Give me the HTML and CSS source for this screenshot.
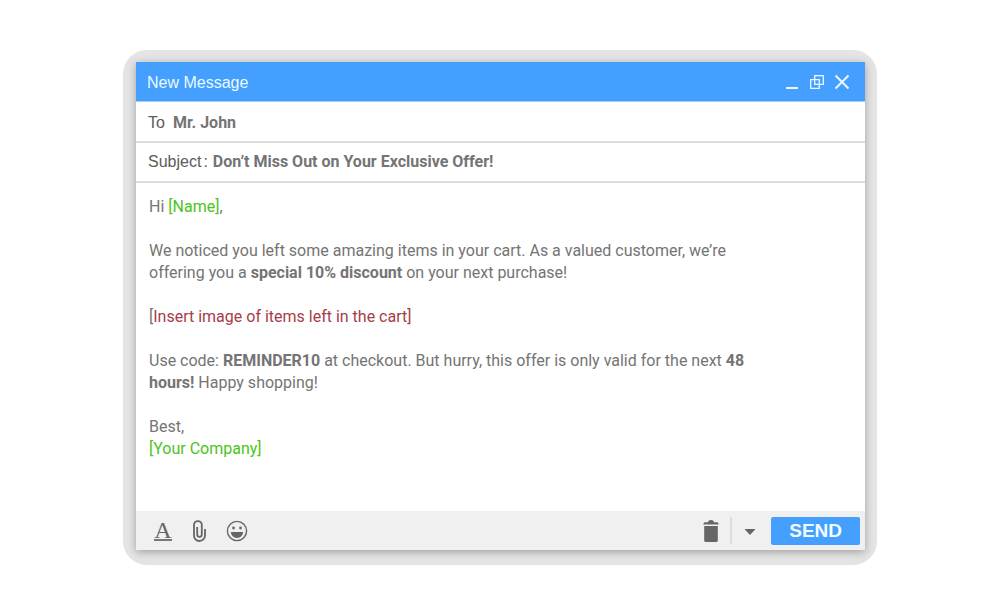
FILE: index.html
```
<!DOCTYPE html>
<html lang="en">
<head>
<meta charset="utf-8">
<meta name="viewport" content="width=device-width, initial-scale=1">
<title>New Message</title>
<link rel="stylesheet" href="styles.css">
</head>
<body>
<main class="frame">
  <form class="composer">
    <header class="titlebar">
      <h1 class="title">New Message</h1>
      <div class="window-controls">
        <button class="icon-button" type="button" aria-label="Minimize">
          <svg width="16" height="16" viewBox="0 0 16 16"><path d="M2 14h12" fill="none" stroke="currentColor" stroke-width="2"/></svg>
        </button>
        <button class="icon-button" type="button" aria-label="Restore">
          <svg width="16" height="16" viewBox="0 0 16 16"><g fill="none" stroke="currentColor" stroke-width="1.3"><path d="M5.700 1.700h8.600v8.600H5.700z"/><path d="M1.700 5.700h8.600v8.600H1.700z"/></g></svg>
        </button>
        <button class="icon-button" type="button" aria-label="Close">
          <svg width="16" height="16" viewBox="0 0 16 16"><path d="M1.500 1.500l13 13M14.500 1.500l-13 13" fill="none" stroke="currentColor" stroke-width="2"/></svg>
        </button>
      </div>
    </header>
    <div class="field field-to">
      <label class="field-label" for="to">To</label>
      <input class="field-input" id="to" type="text" value="Mr. John">
    </div>
    <div class="field">
      <label class="field-label" for="subject">Subject<span class="colon">:</span></label>
      <input class="field-input" id="subject" type="text" value="Don’t Miss Out on Your Exclusive Offer!">
    </div>
    <div class="message">
      <p>Hi <span class="token">[Name]</span>,</p>
      <p>We noticed you left some amazing items in your cart. As a valued customer, we’re offering you a <strong>special 10% discount</strong> on your next purchase!</p>
      <p>[<span class="placeholder">Insert image of items left in the cart]</span></p>
      <p>Use code: <strong>REMINDER10</strong> at checkout. But hurry, this offer is only valid for the next <strong>48 hours!</strong> Happy shopping!</p>
      <p>Best,<br><span class="token">[Your Company]</span></p>
    </div>
    <footer class="toolbar">
      <div class="tools">
        <button class="icon-button format" type="button" aria-label="Formatting"><span class="format-letter">A</span></button>
        <button class="icon-button" type="button" aria-label="Attach file">
          <svg width="16" height="24" viewBox="0 0 16 24"><path d="M14 10v6.500a5.500 5.500 0 0 1-5.700 5.500A5.400 5.400 0 0 1 3 16.500V6a3.900 3.900 0 0 1 7.800 0v9.500a2.300 2.300 0 0 1-4.600 0V8" fill="none" stroke="currentColor" stroke-width="1.800"/></svg>
        </button>
        <button class="icon-button" type="button" aria-label="Insert emoji">
          <svg width="22" height="22" viewBox="0 0 22 22"><circle cx="11" cy="11" r="9.600" fill="none" stroke="currentColor" stroke-width="1.400"/><circle cx="7.500" cy="8" r="1.400" fill="currentColor"/><circle cx="14.500" cy="8" r="1.400" fill="currentColor"/><path d="M4.800 12h12.400a6.200 6 0 0 1-12.400 0z" fill="currentColor"/></svg>
        </button>
      </div>
      <div class="actions">
        <button class="icon-button" type="button" aria-label="Delete draft">
          <svg width="16" height="24" viewBox="0 0 16 24"><path d="M.5 5.500V4.200l1-1h3.300Q5.500 1 8 1t3.200 2.200h3.300l1 1v1.300zM1.200 7h13.600v14.500q0 1.500-1.500 1.500H2.700q-1.500 0-1.500-1.500z" fill="currentColor"/></svg>
        </button>
        <span class="divider"></span>
        <button class="icon-button more" type="button" aria-label="More options">
          <svg width="12" height="6" viewBox="0 0 12 6"><path d="M.5 0h11L6 6z" fill="currentColor"/></svg>
        </button>
        <button class="send" type="submit">SEND</button>
      </div>
    </footer>
  </form>
</main>
</body>
</html>
```
FILE: styles.css
```
* {
  box-sizing: border-box;
}

body {
  display: flex;
  align-items: center;
  justify-content: center;
  min-height: 100vh;
  margin: 0;
  background: #fff;
  color: #747474;
  font-family: Roboto, "Liberation Sans", sans-serif;
}

.frame {
  width: 76%;
  max-width: 754px;
  padding: 12px 12px 15px 13px;
  border-radius: 24px;
  background: #e4e4e4;
}

.composer {
  background: #fff;
  box-shadow: 0 2px 8px rgba(0, 0, 0, 0.3);
}

.titlebar {
  display: flex;
  align-items: center;
  justify-content: space-between;
  min-height: 40px;
  padding: 0 15px 0 11px;
  border-bottom: 1px solid #a3cffb;
  background: #449ffe;
  color: #eafaff;
}

.title {
  margin: 0;
  padding-top: 2px;
  font: 400 16px/20px "Liberation Sans", Arial, sans-serif;
}

.window-controls {
  display: flex;
  gap: 9px;
}

.icon-button {
  display: flex;
  align-items: center;
  justify-content: center;
  padding: 0;
  border: 0;
  background: none;
  color: inherit;
  cursor: pointer;
}

.field {
  display: flex;
  align-items: center;
  gap: 5px;
  min-height: 40px;
  padding: 0 12px;
  border-bottom: 2px solid #dcdcdc;
}

.field-to {
  gap: 8px;
  min-height: 41px;
  padding-top: 2px;
}

.field-label {
  color: #5c5c5c;
  font: 16px/20px "Liberation Sans", Arial, sans-serif;
}

.colon {
  padding-left: 2px;
}

.field-input {
  flex: 1;
  min-width: 0;
  padding: 0;
  border: 0;
  outline: 0;
  background: none;
  color: #747474;
  font: 700 16px/20px Roboto, sans-serif;
}

.message {
  max-width: 644px;
  padding: 13px 12px 51px 13px;
  font-size: 16px;
  line-height: 22px;
}

.message p {
  margin: 0 0 22px;
}

.message p:last-child {
  margin-bottom: 0;
}

.token {
  color: #4bc41b;
}

.placeholder {
  color: #a63d48;
}

.toolbar {
  display: flex;
  align-items: center;
  justify-content: space-between;
  min-height: 39px;
  padding: 0 5px 0 18px;
  background: #f0f0f0;
  color: #666;
}

.tools,
.actions {
  display: flex;
  align-items: center;
}

.tools {
  gap: 19px;
}

.format-letter {
  width: 18px;
  border-bottom: 2px solid #777;
  font: 24px/18px "Liberation Serif", "Times New Roman", serif;
}

.divider {
  width: 2px;
  height: 27px;
  margin-left: 11px;
  background: #dcdcdc;
}

.more {
  margin: 3px 15px 0 12px;
}

.send {
  height: 28px;
  padding: 0 18px;
  border: 0;
  border-radius: 2px;
  background: #449ffe;
  color: #f0fcff;
  font: 700 19px/28px "Liberation Sans", Arial, sans-serif;
  cursor: pointer;
}
```
